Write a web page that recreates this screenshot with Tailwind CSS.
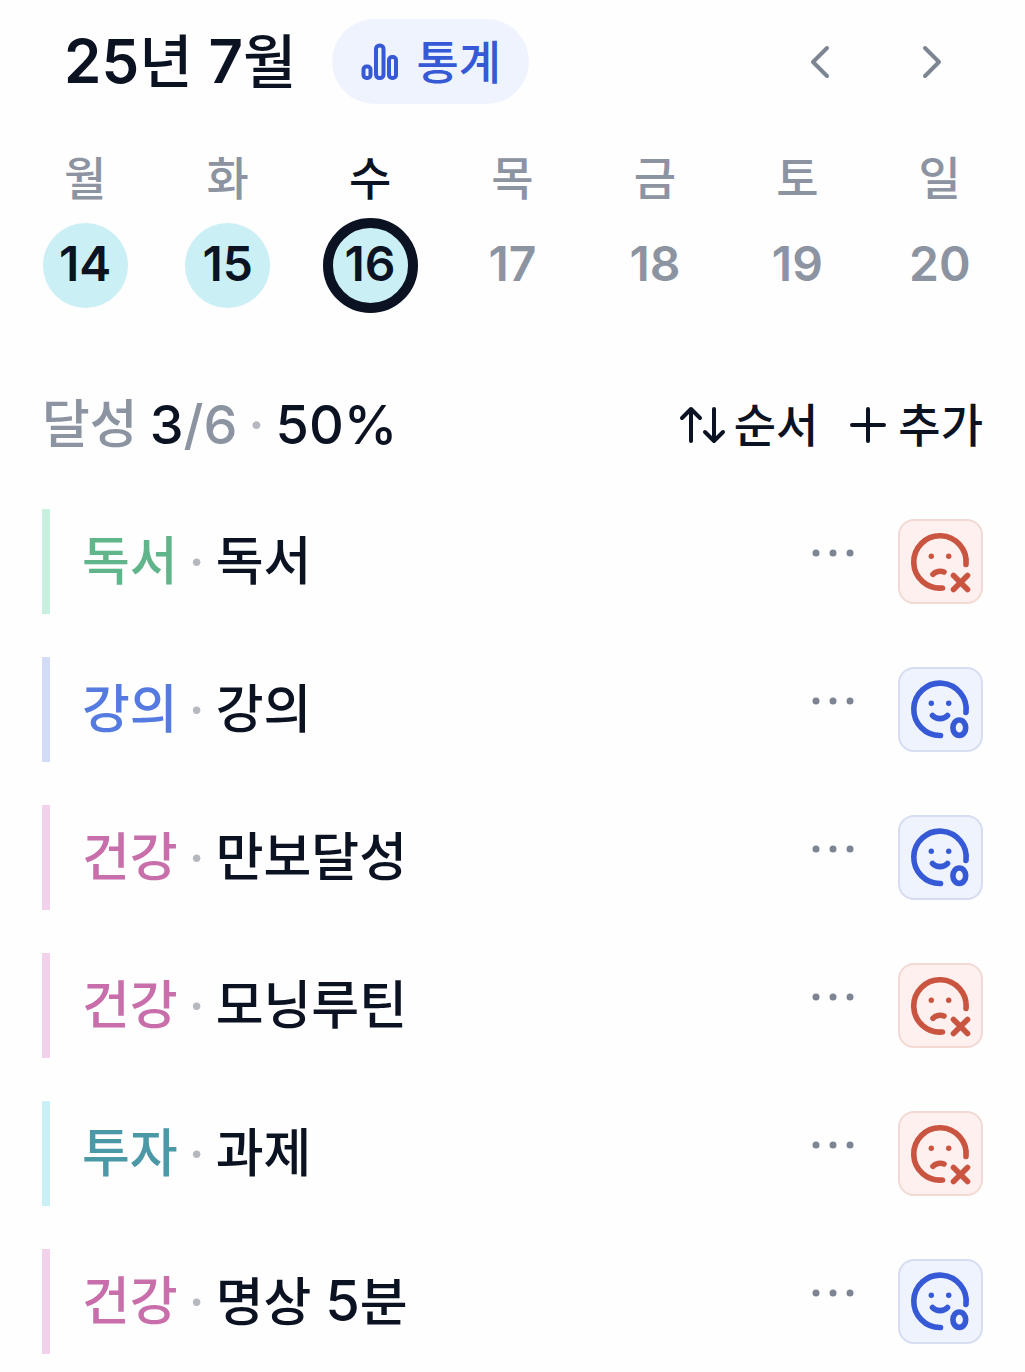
<!DOCTYPE html>
<html lang="ko">
  <head>
    <meta charset="UTF-8" />
    <meta name="viewport" content="width=device-width, initial-scale=1.0" />
    <title>습관 기록</title>
    <script src="https://cdn.jsdelivr.net/npm/@tailwindcss/browser@4"></script>
  </head>
  <body
    class="bg-[#fefefe] text-[#0b1222] font-medium font-['Inter','Noto_Sans_CJK_KR',sans-serif] overflow-x-hidden"
  >
    <!-- shared icons -->
    <svg class="hidden" xmlns="http://www.w3.org/2000/svg">
      <symbol id="icon-sad" viewBox="0 0 85 85">
        <g fill="none" stroke="currentColor" stroke-width="5.6" stroke-linecap="round">
          <path d="M68 45.5A26.2 26.2 0 1 0 44.5 69" />
          <path d="M35 55.3C37.500 52.3 42.5 51.5 46 53" />
          <path d="M55.5 56.5L69.5 70.5M69.5 56.5L55.5 70.5" />
        </g>
        <circle cx="33.3" cy="37.3" r="2.7" fill="currentColor" />
        <circle cx="50.7" cy="37.3" r="2.7" fill="currentColor" />
      </symbol>
      <symbol id="icon-happy" viewBox="0 0 85 85">
        <g fill="none" stroke="currentColor" stroke-width="5.6" stroke-linecap="round">
          <path d="M68 45.5A26.2 26.2 0 1 0 42.5 68.5" />
          <path d="M34.5 48.5C38 52.7 46 52.7 49.5 48.5" />
          <ellipse cx="61.3" cy="60.7" rx="6.4" ry="7.7" />
        </g>
        <circle cx="33.3" cy="36.3" r="2.7" fill="currentColor" />
        <circle cx="50.7" cy="36.3" r="2.7" fill="currentColor" />
      </symbol>
      <symbol id="icon-more" viewBox="0 0 42 8">
        <g fill="currentColor">
          <circle cx="4" cy="4" r="3.5" />
          <circle cx="21" cy="4" r="3.5" />
          <circle cx="38" cy="4" r="3.5" />
        </g>
      </symbol>
    </svg>

    <header class="flex items-center pt-[19px] pl-16 pr-[53px]">
      <h1 class="text-[60px] leading-[84px] whitespace-nowrap">
        <span class="font-semibold">25</span><span class="text-[58px]">년</span>
        <span class="font-semibold">7</span><span class="text-[58px]">월</span>
      </h1>
      <button
        type="button"
        class="ml-9 flex items-center gap-4 h-[85px] px-7 rounded-full bg-[#eff3fe] text-[#3659d6] text-[46px] leading-[60px]"
      >
        <svg class="w-10 h-10" viewBox="0 0 40 40" fill="none" stroke="currentColor" stroke-width="4">
          <rect x="3.500" y="24.500" width="7" height="11.500" rx="3" />
          <rect x="16" y="3.500" width="7.500" height="32.500" rx="3.500" />
          <rect x="29" y="15" width="7" height="21" rx="3" />
        </svg>
        통계
      </button>
      <div class="ml-auto flex gap-8 text-[#7d8492]">
        <button type="button" aria-label="이전 주" class="p-5">
          <svg class="w-10 h-10" viewBox="0 0 40 40" fill="none" stroke="currentColor" stroke-width="4" stroke-linecap="round" stroke-linejoin="round">
            <path d="M27 6L13 20L27 34" />
          </svg>
        </button>
        <button type="button" aria-label="다음 주" class="p-5">
          <svg class="w-10 h-10" viewBox="0 0 40 40" fill="none" stroke="currentColor" stroke-width="4" stroke-linecap="round" stroke-linejoin="round">
            <path d="M13 6L27 20L13 34" />
          </svg>
        </button>
      </div>
    </header>

    <!-- week -->
    <div class="grid grid-cols-7 mt-11 px-[14px] text-center text-[#8c93a1]">
      <div class="flex flex-col items-center gap-[10px]">
        <span class="text-[46px] leading-[60px]">월</span>
        <button type="button" class="size-[85px] my-[5px] pb-1 rounded-full bg-[#caeff4] text-[#0b1222] font-semibold text-5xl">14</button>
      </div>
      <div class="flex flex-col items-center gap-[10px]">
        <span class="text-[46px] leading-[60px]">화</span>
        <button type="button" class="size-[85px] my-[5px] pb-1 rounded-full bg-[#caeff4] text-[#0b1222] font-semibold text-5xl">15</button>
      </div>
      <div class="flex flex-col items-center gap-[10px]">
        <span class="text-[46px] leading-[60px] text-[#0b1222]">수</span>
        <button type="button" class="size-[95px] pb-1 rounded-full border-10 border-[#0b1222] bg-[#caeff4] text-[#0b1222] font-semibold text-5xl">16</button>
      </div>
      <div class="flex flex-col items-center gap-[10px]">
        <span class="text-[46px] leading-[60px]">목</span>
        <button type="button" class="size-[85px] my-[5px] pb-1 rounded-full font-semibold text-5xl">17</button>
      </div>
      <div class="flex flex-col items-center gap-[10px]">
        <span class="text-[46px] leading-[60px]">금</span>
        <button type="button" class="size-[85px] my-[5px] pb-1 rounded-full font-semibold text-5xl">18</button>
      </div>
      <div class="flex flex-col items-center gap-[10px]">
        <span class="text-[46px] leading-[60px]">토</span>
        <button type="button" class="size-[85px] my-[5px] pb-1 rounded-full font-semibold text-5xl">19</button>
      </div>
      <div class="flex flex-col items-center gap-[10px]">
        <span class="text-[46px] leading-[60px]">일</span>
        <button type="button" class="size-[85px] my-[5px] pb-1 rounded-full font-semibold text-5xl">20</button>
      </div>
    </div>

    <main class="px-[42px]">
      <div class="flex items-center justify-between mt-[72px] h-20">
        <p class="flex items-center text-[54px] leading-[76px] whitespace-nowrap">
          <span class="text-[52px] text-[#8c93a1] mr-3">달성</span>
          <span>3</span><span class="text-[#8c93a1]">/6</span>
          <span class="w-[38px] text-center text-[#b5b8be]">·</span>
          <span>50%</span>
        </p>
        <div class="flex gap-8 text-[46px] leading-[60px] whitespace-nowrap">
          <button type="button" class="flex items-center gap-2">
            <svg class="w-12 h-10" viewBox="0 0 48 40" fill="none" stroke="currentColor" stroke-width="4" stroke-linecap="round" stroke-linejoin="round">
              <path d="M13 36V4M4 13L13 4L22 13M36 4V36M27 27L36 36L45 27" />
            </svg>
            순서
          </button>
          <button type="button" class="flex items-center gap-3">
            <svg class="w-9 h-10" viewBox="0 0 36 40" fill="none" stroke="currentColor" stroke-width="4" stroke-linecap="round">
              <path d="M18 4V36M2 20H34" />
            </svg>
            추가
          </button>
        </div>
      </div>

      <ul class="flex flex-col gap-[43px] mt-11 text-[52px] leading-[76px] whitespace-nowrap">
        <li class="flex items-center h-[105px] pl-8 border-l-8 border-[#c9efdf]">
          <span class="text-[#61b58a]">독서</span>
          <span class="w-[38px] text-center text-[#b5b8be]">·</span>
          <span>독서</span>
          <button type="button" aria-label="더보기" class="ml-auto mr-11 self-start h-[88px] text-[#7d8492]">
            <svg class="w-[42px] h-2"><use href="#icon-more" /></svg>
          </button>
          <button type="button" aria-label="미달성" class="size-[85px] rounded-2xl border-2 border-[#f3d9d3] bg-[#fef0ef] text-[#c95540]">
            <svg class="size-[85px] -m-[2px]"><use href="#icon-sad" /></svg>
          </button>
        </li>
        <li class="flex items-center h-[105px] pl-8 border-l-8 border-[#d3dcf6]">
          <span class="text-[#557ae0]">강의</span>
          <span class="w-[38px] text-center text-[#b5b8be]">·</span>
          <span>강의</span>
          <button type="button" aria-label="더보기" class="ml-auto mr-11 self-start h-[88px] text-[#7d8492]">
            <svg class="w-[42px] h-2"><use href="#icon-more" /></svg>
          </button>
          <button type="button" aria-label="달성" class="size-[85px] rounded-2xl border-2 border-[#d6ddf0] bg-[#eff3fe] text-[#3659d6]">
            <svg class="size-[85px] -m-[2px]"><use href="#icon-happy" /></svg>
          </button>
        </li>
        <li class="flex items-center h-[105px] pl-8 border-l-8 border-[#f1d2ea]">
          <span class="text-[#c86fab]">건강</span>
          <span class="w-[38px] text-center text-[#b5b8be]">·</span>
          <span>만보달성</span>
          <button type="button" aria-label="더보기" class="ml-auto mr-11 self-start h-[88px] text-[#7d8492]">
            <svg class="w-[42px] h-2"><use href="#icon-more" /></svg>
          </button>
          <button type="button" aria-label="달성" class="size-[85px] rounded-2xl border-2 border-[#d6ddf0] bg-[#eff3fe] text-[#3659d6]">
            <svg class="size-[85px] -m-[2px]"><use href="#icon-happy" /></svg>
          </button>
        </li>
        <li class="flex items-center h-[105px] pl-8 border-l-8 border-[#f1d2ea]">
          <span class="text-[#c86fab]">건강</span>
          <span class="w-[38px] text-center text-[#b5b8be]">·</span>
          <span>모닝루틴</span>
          <button type="button" aria-label="더보기" class="ml-auto mr-11 self-start h-[88px] text-[#7d8492]">
            <svg class="w-[42px] h-2"><use href="#icon-more" /></svg>
          </button>
          <button type="button" aria-label="미달성" class="size-[85px] rounded-2xl border-2 border-[#f3d9d3] bg-[#fef0ef] text-[#c95540]">
            <svg class="size-[85px] -m-[2px]"><use href="#icon-sad" /></svg>
          </button>
        </li>
        <li class="flex items-center h-[105px] pl-8 border-l-8 border-[#caeff4]">
          <span class="text-[#4b98a6]">투자</span>
          <span class="w-[38px] text-center text-[#b5b8be]">·</span>
          <span>과제</span>
          <button type="button" aria-label="더보기" class="ml-auto mr-11 self-start h-[88px] text-[#7d8492]">
            <svg class="w-[42px] h-2"><use href="#icon-more" /></svg>
          </button>
          <button type="button" aria-label="미달성" class="size-[85px] rounded-2xl border-2 border-[#f3d9d3] bg-[#fef0ef] text-[#c95540]">
            <svg class="size-[85px] -m-[2px]"><use href="#icon-sad" /></svg>
          </button>
        </li>
        <li class="flex items-center h-[105px] pl-8 border-l-8 border-[#f1d2ea]">
          <span class="text-[#c86fab]">건강</span>
          <span class="w-[38px] text-center text-[#b5b8be]">·</span>
          <span>명상 <span class="text-[56px]">5</span>분</span>
          <button type="button" aria-label="더보기" class="ml-auto mr-11 self-start h-[88px] text-[#7d8492]">
            <svg class="w-[42px] h-2"><use href="#icon-more" /></svg>
          </button>
          <button type="button" aria-label="달성" class="size-[85px] rounded-2xl border-2 border-[#d6ddf0] bg-[#eff3fe] text-[#3659d6]">
            <svg class="size-[85px] -m-[2px]"><use href="#icon-happy" /></svg>
          </button>
        </li>
      </ul>
    </main>
  </body>
</html>
